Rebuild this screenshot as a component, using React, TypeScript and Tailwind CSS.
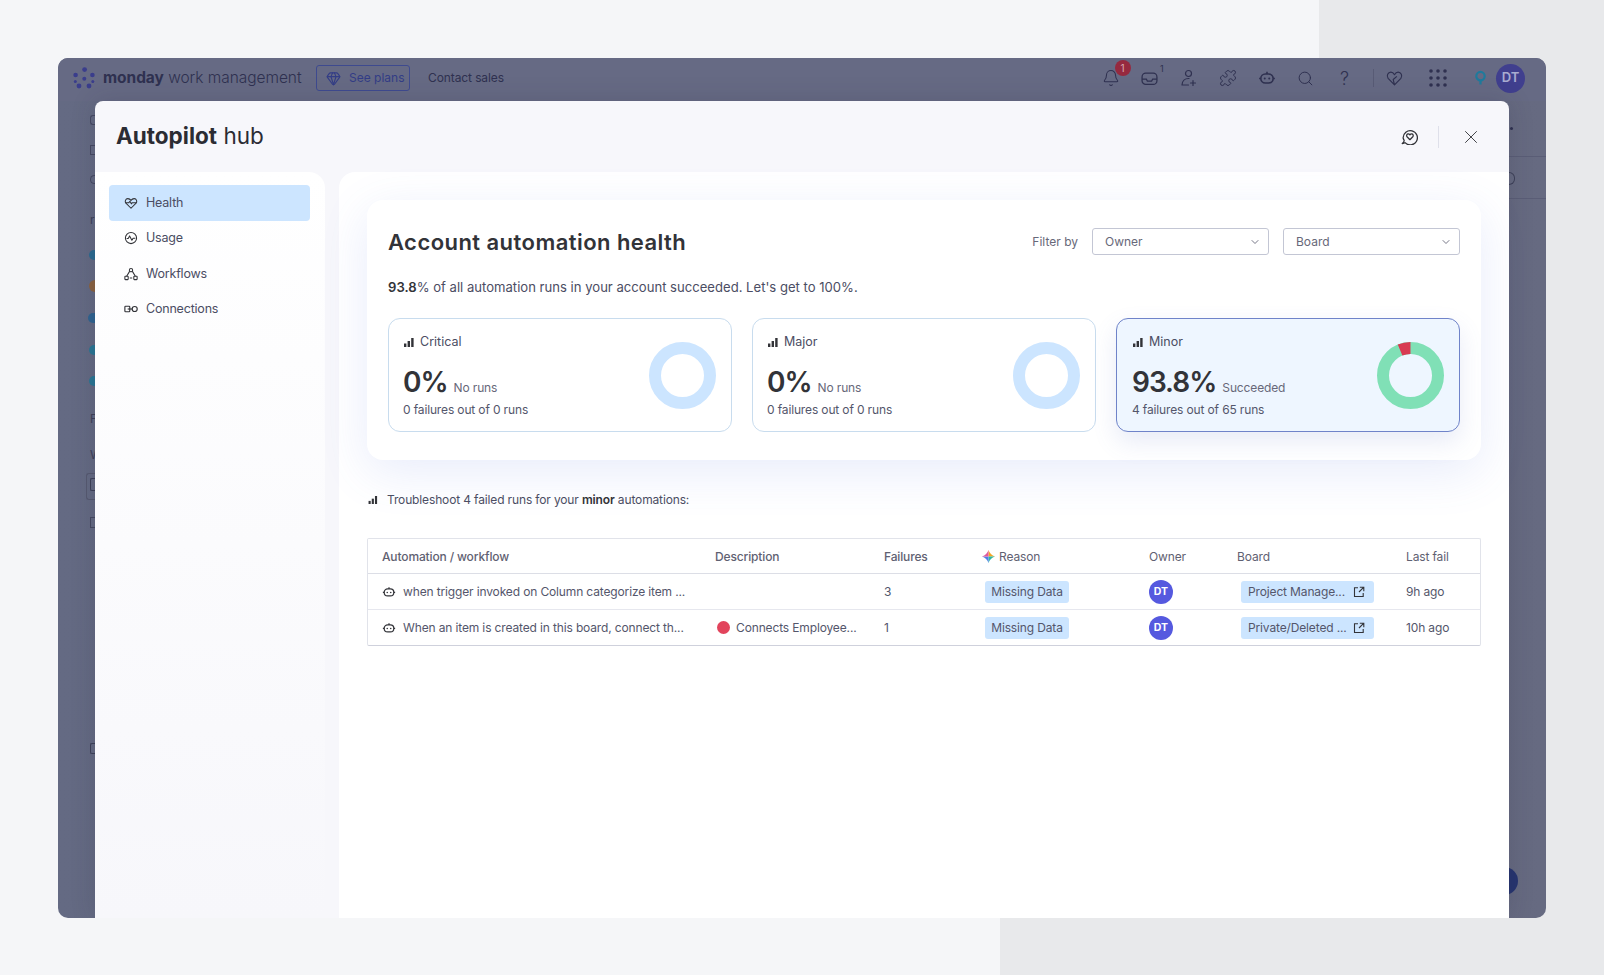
import { Bell, ChevronDown, Gem, Puzzle, Search, X } from 'lucide-react';

const Bars = ({ className }: { className?: string }) => (
  <svg viewBox="0 0 10 9" className={className} fill="currentColor">
    <rect x="0" y="5.5" width="2.4" height="3.5" />
    <rect x="3.6" y="3" width="2.4" height="6" />
    <rect x="7.2" y="0" width="2.4" height="9" />
  </svg>
);

const Robot = ({ className }: { className?: string }) => (
  <svg viewBox="0 0 16 16" className={className} fill="none" stroke="currentColor" strokeWidth="1.4">
    <rect x="2.5" y="4.5" width="11" height="8" rx="4" />
    <path d="M8 4.5V2.5M1 8.5h1.5M13.5 8.5H15" />
    <circle cx="6" cy="8.5" r="0.9" fill="currentColor" stroke="none" />
    <circle cx="10" cy="8.5" r="0.9" fill="currentColor" stroke="none" />
  </svg>
);

const HeartPulse = ({ className }: { className?: string }) => (
  <svg viewBox="0 0 16 16" className={className} fill="none" stroke="currentColor" strokeWidth="1.2" strokeLinejoin="round">
    <path d="M8 14 2.2 8.2C.6 6.4 1.6 3 4.4 3 6 3 7.2 3.8 8 5c.8-1.2 2-2 3.6-2 2.8 0 3.8 3.4 2.2 5.2L8 14Z" />
    <path d="M1.6 7.6h4l1.2-1.6 1.6 3 1-1.4h4.8" />
  </svg>
);

const UsageIcon = ({ className }: { className?: string }) => (
  <svg viewBox="0 0 16 16" className={className} fill="none" stroke="currentColor" strokeWidth="1.2" strokeLinejoin="round">
    <circle cx="8" cy="8" r="6.4" />
    <path d="M3 8.6h1.8l1.6-3 2.6 5 1.4-2.4H13" />
  </svg>
);

const WorkflowIcon = ({ className }: { className?: string }) => (
  <svg viewBox="0 0 16 16" className={className} fill="none" stroke="currentColor" strokeWidth="1.2">
    <circle cx="8" cy="3.6" r="1.9" />
    <rect x="1" y="10.6" width="3.8" height="3.8" rx="0.6" />
    <rect x="11.2" y="10.6" width="3.8" height="3.8" rx="0.6" />
    <path d="M6.4 5 3 10.6M9.6 5 13 10.6M6.6 12.5h2.8" />
  </svg>
);

const ConnectionIcon = ({ className }: { className?: string }) => (
  <svg viewBox="0 0 16 16" className={className} fill="none" stroke="currentColor" strokeWidth="1.3">
    <rect x="1" y="4.8" width="5.6" height="6.4" rx="0.8" />
    <circle cx="12.2" cy="8" r="2.9" />
    <path d="M4.2 8h5.6" />
  </svg>
);

const ChatHeart = ({ className }: { className?: string }) => (
  <svg viewBox="0 0 16 16" className={className} fill="none" stroke="currentColor" strokeWidth="1.2" strokeLinejoin="round">
    <path d="M1.2 14.6c1.2 0 2-.2 2.6-.8A6.7 6.7 0 1 0 2 9.4c.3 1 .6 1.7 1 2.3 0 1-.7 2-1.8 2.9Z" />
    <path d="M8.4 11 5.7 8.2c-.9-1-.3-2.6 1.1-2.6.7 0 1.2.3 1.6.9.4-.6.9-.9 1.6-.9 1.4 0 2 1.6 1.1 2.6L8.4 11Z" />
  </svg>
);

const OpenIcon = ({ className }: { className?: string }) => (
  <svg viewBox="0 0 12 12" className={className} fill="none" stroke="currentColor" strokeWidth="1.1">
    <path d="M5 1.8H1.5v8.7h8.7V7" />
    <path d="M6.8 1.2h4v4M10.6 1.4 6 6" />
  </svg>
);

const MondayLogo = () => (
  <svg viewBox="0 0 24 22" className="h-[22px] w-[24px]" fill="#3a3d8c">
    <circle cx="12.6" cy="2.6" r="2.4" />
    <circle cx="3.6" cy="8" r="2.3" />
    <circle cx="20.4" cy="8" r="2.3" />
    <circle cx="12.3" cy="11.8" r="2" />
    <circle cx="3.3" cy="14.4" r="1.5" />
    <circle cx="20.8" cy="14.6" r="1.5" />
    <circle cx="7" cy="19" r="2.4" />
    <circle cx="17" cy="19" r="2.4" />
  </svg>
);

const GridDots = () => (
  <svg viewBox="0 0 18 18" className="h-[18px] w-[18px]" fill="#2f3150">
    {[2, 9, 16].map((y) =>
      [2, 9, 16].map((x) => <circle key={`${x}-${y}`} cx={x} cy={y} r="1.8" />)
    )}
  </svg>
);

const Donut = ({ failed }: { failed?: number }) => (
  <svg viewBox="0 0 67 67" className="h-[67px] w-[67px] shrink-0 -rotate-90">
    {failed === undefined ? (
      <circle cx="33.5" cy="33.5" r="27.5" fill="none" stroke="#cce5ff" strokeWidth="12" />
    ) : (
      <>
        <circle cx="33.5" cy="33.5" r="27.5" fill="none" stroke="#80e0b6" strokeWidth="12" />
        <circle
          cx="33.5"
          cy="33.5"
          r="27.5"
          fill="none"
          stroke="#d83a52"
          strokeWidth="12"
          pathLength={100}
          strokeDasharray={`${failed} ${100 - failed}`}
          strokeDashoffset={failed}
        />
      </>
    )}
  </svg>
);

function StatCard({ label, value, note, detail, failed, active }: {
  label: string;
  value: string;
  note: string;
  detail: string;
  failed?: number;
  active?: boolean;
}) {
  return (
    <div
      className={
        active
          ? 'flex h-[114px] w-[344px] items-center justify-between rounded-[12px] border border-[#6f83c9] bg-[#eef6ff] pl-[15px] pr-[15px] shadow-[0_10px_24px_rgba(90,110,200,0.14)]'
          : 'flex h-[114px] w-[344px] items-center justify-between rounded-[12px] border border-[#c8dcee] bg-white pl-[14px] pr-[15px]'
      }
    >
      <div className="flex h-full flex-col pt-[13px]">
        <div className="flex h-[20px] items-center gap-[6px] pl-[1px] text-[12.5px] text-[#4b4d63]">
          <Bars className="h-[9px] w-[10px] text-[#323338]" />
          {label}
        </div>
        <div className="mt-[12px] flex h-[36px] items-baseline gap-[6px]">
          <span className="text-[28px] font-semibold leading-[36px] tracking-[-1px] text-[#323338]">{value}</span>
          <span className="text-[12px] tracking-[-0.14px] text-[#676879]">{note}</span>
        </div>
        <div className="mt-[1px] h-[18px] text-[12px] leading-[18px] tracking-[-0.14px] text-[#54566b]">{detail}</div>
      </div>
      <Donut failed={failed} />
    </div>
  );
}

const gridCols = 'grid grid-cols-[333px_169px_98px_167px_88px_169px_1fr] items-center pl-[14px]';

const rows = [
  { name: 'when trigger invoked on Column categorize item ...', desc: '', fails: '3', board: 'Project Manage...', last: '9h ago' },
  { name: 'When an item is created in this board, connect th...', desc: 'Connects Employee...', fails: '1', board: 'Private/Deleted ...', last: '10h ago' },
];

const navItems = [
  { label: 'Health', Icon: HeartPulse, active: true },
  { label: 'Usage', Icon: UsageIcon },
  { label: 'Workflows', Icon: WorkflowIcon },
  { label: 'Connections', Icon: ConnectionIcon },
];

export default function App() {
  return (
    <div className="relative h-[975px] w-[1604px] overflow-hidden bg-[#f5f6f8] pl-[58px] pt-[58px] font-['Inter',sans-serif] text-[#323338]">
      {/* page backdrop blocks */}
      <div className="absolute left-[1319px] top-0 h-[975px] w-[285px] bg-[#e8e9eb]" />
      <div className="absolute left-[1000px] top-[918px] h-[57px] w-[604px] bg-[#e8e9eb]" />

      <div className="relative flex h-[860px] w-[1488px] flex-col overflow-hidden rounded-[10px] bg-gradient-to-r from-[#646a83] via-[#5f627a] to-[#666a81]">
        {/* dimmed top bar */}
        <div className="flex h-[43px] shrink-0 items-center bg-[#666a84] pb-[3px] pl-[14px] text-[#2f3150]">
          <MondayLogo />
          <div className="ml-[7px] w-[213px] whitespace-nowrap text-[15.5px] tracking-[-0.05px]">
            <span className="font-bold">monday</span> <span className="font-light">work management</span>
          </div>
          <div className="flex h-[26px] w-[94px] items-center rounded-[3px] border border-[#3e4a8f] pl-[9px] text-[12px] text-[#333d86]">
            <Gem className="h-[15px] w-[15px]" strokeWidth={1.8} />
            <span className="ml-[8px]">See plans</span>
          </div>
          <span className="ml-[18px] text-[12px] tracking-[-0.1px]">Contact sales</span>

          <div className="ml-auto flex items-center pr-[21px]">
            <div className="flex w-[39px] justify-center">
              <div className="relative">
                <Bell className="h-[18px] w-[18px]" strokeWidth={1.4} />
                <span className="absolute left-[13px] top-[-9px] flex h-[16px] w-[16px] items-center justify-center rounded-full bg-[#96293f] text-[10px] text-[#d9a9b2]">1</span>
              </div>
            </div>
            <div className="relative flex w-[39px] justify-center">
              <svg viewBox="0 0 16 13" className="h-[15px] w-[17px]" fill="none" stroke="currentColor" strokeWidth="1.2">
                <rect x="1" y="1.5" width="14" height="10.5" rx="3.5" />
                <path d="M1 7h4l1 2h4l1-2h4" />
              </svg>
              <span className="absolute left-[30px] top-[-9px] text-[9px]">1</span>
            </div>
            <div className="flex w-[39px] justify-center">
              <svg viewBox="0 0 18 18" className="h-[18px] w-[18px]" fill="none" stroke="currentColor" strokeWidth="1.2" strokeLinecap="round">
                <circle cx="8.5" cy="4.5" r="3" />
                <path d="M2 16c.2-4 3-6.5 6.5-6.5H9M2 16h6.5M13 11.5v5M10.5 14h5" />
              </svg>
            </div>
            <div className="flex w-[39px] justify-center"><Puzzle className="h-[18px] w-[18px]" strokeWidth={1.3} /></div>
            <div className="flex w-[39px] justify-center"><Robot className="h-[18px] w-[18px]" /></div>
            <div className="flex w-[39px] justify-center"><Search className="h-[17px] w-[17px]" strokeWidth={1.4} /></div>
            <div className="flex w-[39px] justify-center text-[18px] font-light">?</div>
            <div className="ml-[9px] mr-[8px] h-[18px] w-px bg-[#585b75]" />
            <div className="flex w-[24px] justify-center">
              <svg viewBox="0 0 16 14" className="h-[15px] w-[17px]" fill="none" stroke="currentColor" strokeWidth="1.1" strokeLinejoin="round">
                <path d="M8 13 2 6.8C.2 4.6 1.8 1 4.6 1 6 1 7.2 2 8 3.4 8.8 2 10 1 11.4 1c2.8 0 4.4 3.6 2.6 5.8L8 13ZM8 13 6.800 8l3.400-3" />
              </svg>
            </div>
            <div className="ml-[20px] flex w-[24px] justify-center"><GridDots /></div>
            <div className="ml-[18px] flex w-[24px] justify-center">
              <svg viewBox="0 0 14 16" className="h-[16px] w-[13px]" fill="none" stroke="#1f7a9c" strokeWidth="2.4">
                <circle cx="7" cy="6" r="4.5" />
                <path d="M7 11v4" />
              </svg>
            </div>
            <div className="ml-[4px] flex h-[29px] w-[29px] items-center justify-center rounded-full bg-[#403f8e] text-[13px] font-semibold text-[#a9acd0]">DT</div>
          </div>
        </div>

        <div className="relative flex-1 pl-[37px]">
          {/* ghost of the page behind the modal */}
          <div className="absolute left-[32px] top-[14px] h-[10px] w-[8px] rounded-l-[3px] border border-r-0 border-[#464962]" />
          <div className="absolute left-[32px] top-[44px] h-[10px] w-[8px] rounded-l-[1px] border border-r-0 border-[#464962]" />
          <div className="absolute left-[32px] top-[74px] h-[9px] w-[8px] rounded-l-full border border-r-0 border-[#464962]" />
          <span className="absolute left-[32px] top-[110px] text-[12px] text-[#3d4058]">r</span>
          <div className="absolute left-[31px] top-[149px] h-[10px] w-[7px] rounded-l-full bg-[#2a6a90]" />
          <div className="absolute left-[31px] top-[179px] h-[12px] w-[7px] rounded-l-full bg-[#8a6240]" />
          <div className="absolute left-[30px] top-[212px] h-[10px] w-[7px] rounded-l-full bg-[#2f6390]" />
          <div className="absolute left-[31px] top-[244px] h-[10px] w-[7px] rounded-l-full bg-[#2a7694]" />
          <div className="absolute left-[31px] top-[275px] h-[10px] w-[7px] rounded-l-full bg-[#2a7694]" />
          <span className="absolute left-[32px] top-[309px] text-[12px] text-[#3d4058]">F</span>
          <span className="absolute left-[32px] top-[345px] text-[12px] text-[#3d4058]">W</span>
          <div className="absolute left-[28px] top-[372px] h-[27px] w-[10px] rounded-l-[3px] border border-r-0 border-[#565970]" />
          <div className="absolute left-[32px] top-[377px] h-[13px] w-[6px] rounded-l-[2px] border border-r-0 border-[#3d4058]" />
          <div className="absolute left-[32px] top-[416px] h-[11px] w-[6px] border border-r-0 border-[#464962]" />
          <div className="absolute left-[32px] top-[642px] h-[11px] w-[6px] rounded-l-[2px] border border-r-0 border-[#3d4058]" />
          <div className="absolute right-0 top-[55px] h-px w-[37px] bg-[#5a5d76]" />
          <div className="absolute right-0 top-[97px] h-px w-[37px] bg-[#5a5d76]" />
          <div className="absolute left-[1452px] top-[26px] h-[3px] w-[3px] rounded-full bg-[#2f3150]" />
          <div className="absolute left-[1451px] top-[71px] h-[13px] w-[6px] rounded-r-full border border-l-0 border-[#3d4058]" />
          <div className="absolute left-[1440px] top-[766px] h-[28px] w-[20px] rounded-r-full bg-[#26346f]" />

          {/* modal */}
          <div className="relative flex h-[817px] w-[1414px] flex-col rounded-t-[8px] rounded-b-[6px] bg-[#f7f7fb] shadow-[0_0_24px_rgba(40,40,60,0.18)]">
            <div className="flex h-[71px] shrink-0 items-center pl-[21px] pr-[27px]">
              <h1 className="text-[22.5px] leading-none text-[#2b2c33]">
                <span className="font-bold">Autopilot</span> <span className="font-normal">hub</span>
              </h1>
              <div className="ml-auto flex items-center">
                <ChatHeart className="-mt-[1px] h-[17px] w-[17px] text-[#323338]" />
                <div className="ml-[20px] h-[22px] w-px bg-[#dfe0ea]" />
                <X className="ml-[21px] h-[22px] w-[22px] text-[#323338]" strokeWidth={1} />
              </div>
            </div>

            <div className="flex min-h-0 flex-1 gap-[14px]">
              <aside className="w-[230px] shrink-0 rounded-tr-[16px] bg-gradient-to-b from-white to-[#f7f7fb] pl-[14px] pr-[15px] pt-[13px]">
                {navItems.map(({ label, Icon, active }) => (
                  <div
                    key={label}
                    className={
                      active
                        ? 'flex h-[35.5px] items-center gap-[8px] rounded-[4px] bg-[#cce5ff] pl-[15px] text-[12.5px] tracking-[-0.2px] text-[#4b4d63]'
                        : 'flex h-[35.5px] items-center gap-[8px] rounded-[4px] pl-[15px] text-[12.5px] tracking-[-0.2px] text-[#4b4d63]'
                    }
                  >
                    <Icon className="h-[14px] w-[14px] text-[#323338]" />
                    <span className="pt-[1px]">{label}</span>
                  </div>
                ))}
              </aside>

              <main className="min-w-0 flex-1 rounded-tl-[16px] bg-white pl-[28px] pr-[28px] pt-[28px]">
                <section className="h-[260px] rounded-[16px] bg-white px-[21px] pt-[28px] shadow-[0_12px_48px_rgba(95,120,225,0.14)]">
                  <div className="flex h-[27px] items-center">
                    <h2 className="pt-[2px] text-[22px] font-semibold tracking-[0.45px] text-[#323338]">Account automation health</h2>
                    <span className="ml-auto text-[12px] text-[#676879]">Filter by</span>
                    <div className="ml-[14px] flex h-[27px] w-[177px] items-center justify-between rounded-[3px] border border-[#c3c6d4] pl-[12px] pr-[7px] text-[12px] text-[#676879]">
                      Owner
                      <ChevronDown className="h-[12px] w-[12px]" strokeWidth={1.8} />
                    </div>
                    <div className="ml-[14px] flex h-[27px] w-[177px] items-center justify-between rounded-[3px] border border-[#c3c6d4] pl-[12px] pr-[7px] text-[12px] text-[#676879]">
                      Board
                      <ChevronDown className="h-[12px] w-[12px]" strokeWidth={1.8} />
                    </div>
                  </div>
                  <p className="mt-[22px] h-[20px] text-[13.1px] leading-[20px] text-[#4b4d63]">
                    <span className="font-semibold text-[#323338]">93.8</span>% of all automation runs in your account succeeded. Let's get to 100%.
                  </p>
                  <div className="mt-[21px] flex gap-[20px]">
                    <StatCard label="Critical" value="0%" note="No runs" detail="0 failures out of 0 runs" />
                    <StatCard label="Major" value="0%" note="No runs" detail="0 failures out of 0 runs" />
                    <StatCard label="Minor" value="93.8%" note="Succeeded" detail="4 failures out of 65 runs" failed={6.2} active />
                  </div>
                </section>

                <div className="mt-[30px] flex h-[20px] items-center pl-[1px] text-[12px] tracking-[-0.14px] text-[#4b4d63]">
                  <Bars className="h-[8px] w-[10px] text-[#323338]" />
                  <span className="ml-[9px]">
                    Troubleshoot 4 failed runs for your <span className="font-semibold text-[#323338]">minor</span> automations:
                  </span>
                </div>

                <div className="mt-[28px] rounded-[2px] border border-[#e1e3ea] border-b-[#cfd1dc] bg-white text-[12px] tracking-[-0.14px] text-[#54566b]">
                  <div className={`${gridCols} h-[35px] border-b border-[#dcdee6] pt-[1px] font-medium text-[#5f6172]`}>
                    <span>Automation / workflow</span>
                    <span>Description</span>
                    <span>Failures</span>
                    <span className="flex items-center gap-[4px] font-normal">
                      <svg viewBox="0 0 12 12" className="h-[13px] w-[13px]">
                        <path d="M6 0 Q7.5 4.5 12 6 L6 6Z" fill="#f5a623" />
                        <path d="M12 6 Q7.5 7.5 6 12 L6 6Z" fill="#2fb8a6" />
                        <path d="M6 12 Q4.5 7.5 0 6 L6 6Z" fill="#4f7ee8" />
                        <path d="M0 6 Q4.5 4.5 6 0 L6 6Z" fill="#e25a9c" />
                      </svg>
                      Reason
                    </span>
                    <span className="font-normal">Owner</span>
                    <span className="font-normal">Board</span>
                    <span className="font-normal">Last fail</span>
                  </div>
                  {rows.map((row, i) => (
                    <div key={row.name} className={i === 0 ? `${gridCols} h-[36px] border-b border-[#e6e7ee]` : `${gridCols} h-[35px]`}>
                      <span className="flex items-center gap-[7px] whitespace-nowrap">
                        <Robot className="h-[14px] w-[14px] text-[#323338]" />
                        {row.name}
                      </span>
                      <span className="flex items-center gap-[6px] pl-[2px] whitespace-nowrap">
                        {row.desc && <span className="h-[13px] w-[13px] rounded-full bg-[#e2445c]" />}
                        {row.desc}
                      </span>
                      <span>{row.fails}</span>
                      <span className="ml-[3px] flex h-[22px] w-[84px] items-center justify-center rounded-[3px] bg-[#cce5ff] text-[12px]">Missing Data</span>
                      <span className="flex h-[24px] w-[24px] items-center justify-center rounded-full bg-[#5559df] text-[10.5px] font-bold tracking-normal text-white">DT</span>
                      <span className="ml-[4px] flex h-[22px] w-[133px] items-center justify-between rounded-[3px] bg-[#cce5ff] pl-[7px] pr-[9px] whitespace-nowrap">
                        {row.board}
                        <OpenIcon className="h-[12px] w-[12px] text-[#323338]" />
                      </span>
                      <span>{row.last}</span>
                    </div>
                  ))}
                </div>
              </main>
            </div>
          </div>
        </div>
      </div>
    </div>
  );
}
